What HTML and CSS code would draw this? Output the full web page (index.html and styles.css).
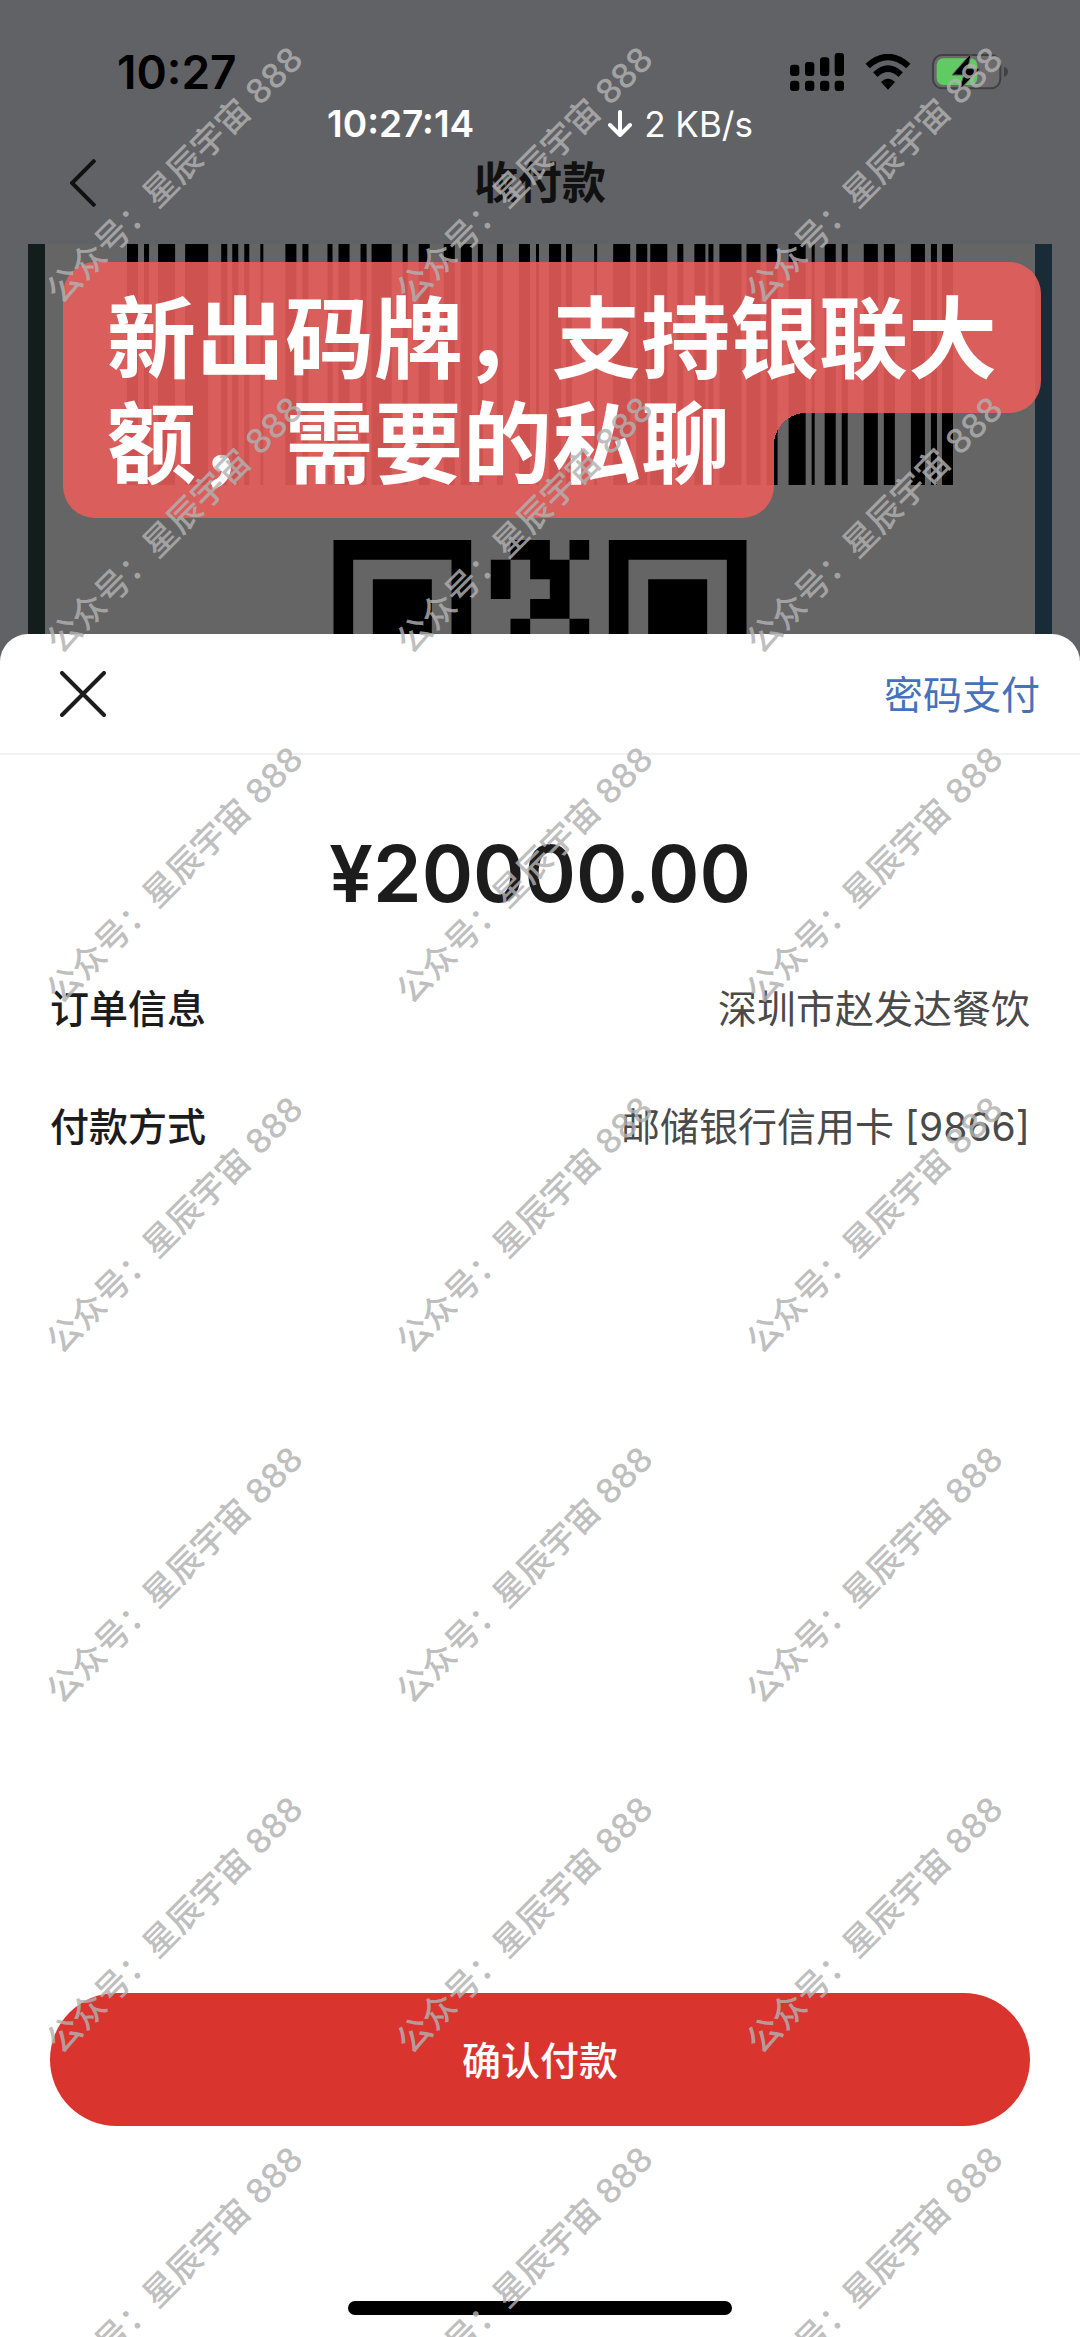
FILE: index.html
```html
<!DOCTYPE html>
<html lang="zh-CN">
<head>
<meta charset="utf-8">
<meta name="viewport" content="width=device-width, initial-scale=1">
<title>收付款</title>
<link rel="stylesheet" href="styles.css">
</head>
<body>
<div class="screen">
  <div class="backdrop">
    <div class="status">
      <span class="status-time">10:27</span>
      <span class="status-icons">
        <svg class="icon-signal" viewBox="0 0 162 114" aria-hidden="true">
          <rect x="0" y="35" width="28" height="34" rx="9"/><rect x="45" y="27" width="28" height="42" rx="9"/><rect x="90" y="13" width="28" height="56" rx="9"/><rect x="134" y="0" width="28" height="69" rx="9"/>
          <rect x="0" y="83" width="28" height="31" rx="9"/><rect x="45" y="83" width="28" height="31" rx="9"/><rect x="90" y="83" width="28" height="31" rx="9"/><rect x="134" y="83" width="28" height="31" rx="9"/>
        </svg>
        <svg class="icon-wifi" viewBox="0 0 138 108" aria-hidden="true">
          <path d="M8 36Q69-18 130 36" fill="none" stroke="#000" stroke-width="19"/>
          <path d="M31 62Q69 26 107 62" fill="none" stroke="#000" stroke-width="19"/>
          <path d="M48 84Q69 64 90 84L69 107Z"/>
        </svg>
        <svg class="icon-battery" viewBox="0 0 228 114" aria-hidden="true">
          <rect x="3" y="6" width="202" height="100" rx="28" fill="#6c6a6d" stroke="#404144" stroke-width="6"/>
          <rect x="14" y="16" width="122" height="80" rx="20" fill="#5fcb62"/>
          <path d="M216 41q12 4 12 15t-12 15z" fill="#404144"/>
          <path d="M118 0L60 66H96L80 114L144 47H107Z" fill="#000" stroke="#616266" stroke-width="3"/>
        </svg>
      </span>
    </div>
    <div class="net">
      <span class="net-clock">10:27:14</span>
      <span class="net-speed"><svg class="icon-down" viewBox="0 0 24 28" aria-hidden="true"><path d="M12 2V25M2 15L12 25L22 15"/></svg>2 KB/s</span>
    </div>
    <div class="nav">
      <button class="nav-back" type="button" aria-label="返回"><svg viewBox="0 0 26 48" aria-hidden="true"><path d="M25 1L2 24L25 47"/></svg></button>
      <h1 class="nav-title">收付款</h1>
    </div>
    <div class="code-card">
      <svg class="barcode" viewBox="0 0 824 241" preserveAspectRatio="none" role="img" aria-label="条形码">
        <path d="M0 0h11v241H0zM17 0h5v241h-5zM31 0h17v241H31zM58 0h23v241H58zM94 0h6v241h-6zM105 0h6v241h-6zM117 0h5v241h-5zM133 0h3v241h-3zM158 0h11v241h-11zM175 0h6v241h-6zM200 0h5v241h-5zM211 0h11v241h-11zM233 0h6v241h-6zM244 0h20v241h-20zM275 0h5v241h-5zM291 0h11v241h-11zM316 0h11v241h-11zM333 0h11v241h-11zM350 0h5v241h-5zM369 0h6v241h-6zM391 0h11v241h-11zM408 0h3v241h-3zM421 0h12v241h-12zM438 0h6v241h-6zM466 0h3v241h-3zM485 0h17v241h-17zM508 0h11v241h-11zM522 0h17v241h-17zM549 0h6v241h-6zM566 0h11v241h-11zM580 0h5v241h-5zM591 0h22v241h-22zM618 0h14v241h-14zM638 0h11v241h-11zM660 0h17v241h-17zM683 0h3v241h-3zM696 0h11v241h-11zM713 0h6v241h-6zM735 0h14v241h-14zM755 0h11v241h-11zM782 0h14v241h-14zM802 0h6v241h-6zM813 0h11v241h-11z"/>
      </svg>
      <svg class="qr" viewBox="0 0 21 6" role="img" aria-label="二维码">
        <path fill-rule="evenodd" d="M0 0H7V7H0zM1 1V7H6V1z"/><path d="M2 2H5V6H2z"/>
        <path fill-rule="evenodd" d="M14 0H21V7H14zM15 1V7H20V1z"/><path d="M16 2H19V6H16z"/>
        <path d="M9 0H11V1H12V4H10V3H11V2H10V1H9zM12 0H13V1H12zM8 1H9V3H8zM9 4H10V5H9zM12 4H13V5H12z"/>
      </svg>
      <p class="notice"><span class="notice-first">新出码牌，支持银联大</span><span class="notice-last">额，需要的私聊</span></p>
    </div>
  </div>

  <main class="sheet">
    <header class="sheet-head">
      <button class="close" type="button" aria-label="关闭"><svg viewBox="0 0 46 46" aria-hidden="true"><path d="M2 2L44 44M44 2L2 44"/></svg></button>
      <a class="switch" href="#">密码支付</a>
    </header>
    <p class="amount">¥20000.00</p>
    <dl class="details">
      <div class="row"><dt>订单信息</dt><dd>深圳市赵发达餐饮</dd></div>
      <div class="row"><dt>付款方式</dt><dd>邮储银行信用卡 [9866]</dd></div>
    </dl>
    <button class="confirm" type="button">确认付款</button>
    <div class="home"></div>
  </main>

  <div class="marks" aria-hidden="true">
    <span>公众号：星辰宇宙 888</span><span>公众号：星辰宇宙 888</span><span>公众号：星辰宇宙 888</span>
    <span>公众号：星辰宇宙 888</span><span>公众号：星辰宇宙 888</span><span>公众号：星辰宇宙 888</span>
    <span>公众号：星辰宇宙 888</span><span>公众号：星辰宇宙 888</span><span>公众号：星辰宇宙 888</span>
    <span>公众号：星辰宇宙 888</span><span>公众号：星辰宇宙 888</span><span>公众号：星辰宇宙 888</span>
    <span>公众号：星辰宇宙 888</span><span>公众号：星辰宇宙 888</span><span>公众号：星辰宇宙 888</span>
    <span>公众号：星辰宇宙 888</span><span>公众号：星辰宇宙 888</span><span>公众号：星辰宇宙 888</span>
    <span>公众号：星辰宇宙 888</span><span>公众号：星辰宇宙 888</span><span>公众号：星辰宇宙 888</span>
  </div>
</div>
</body>
</html>
```
FILE: styles.css
```css
* { box-sizing: border-box; }
body, h1, p, dl, dd { margin: 0; }
body {
  font-family: Inter, "Noto Sans CJK SC", sans-serif;
  color: #1c1c1c;
}
button {
  border: 0;
  padding: 0;
  background: none;
  font: inherit;
  color: inherit;
}
svg { display: block; }

.screen {
  position: relative;
  display: flex;
  flex-direction: column;
  min-height: 100vh;
  overflow: hidden;
}

/* dimmed page behind the sheet */
.backdrop { background: #616266; }

.status {
  display: flex;
  justify-content: space-between;
  align-items: center;
  height: 100px;
  padding: 44px 72px 0 117px;
}
.status-time {
  font-size: 46px;
  line-height: 56px;
  font-weight: 600;
  color: #000;
}
.status-icons {
  display: flex;
  align-items: center;
  gap: 21px;
}
.icon-signal { width: 54px; height: 38px; }
.icon-wifi { width: 46px; height: 36px; }
.icon-battery { width: 76px; height: 38px; }

.net {
  display: flex;
  justify-content: center;
  gap: 134px;
  font-size: 35px;
  line-height: 48px;
  color: #fff;
}
.net-clock {
  font-size: 37px;
  font-weight: 600;
}
.net-speed {
  display: flex;
  align-items: center;
  gap: 12px;
}
.icon-down {
  width: 24px;
  height: 28px;
  fill: none;
  stroke: #fff;
  stroke-width: 4;
  stroke-linecap: round;
  stroke-linejoin: round;
}

.nav {
  display: grid;
  grid-template-columns: 1fr auto 1fr;
  align-items: center;
  height: 96px;
  padding: 0 70px 26px;
}
.nav-back svg {
  width: 26px;
  height: 48px;
  fill: none;
  stroke: #111;
  stroke-width: 4;
}
.nav-title {
  font-size: 44px;
  line-height: 64px;
  font-weight: 600;
  color: #111;
}

.code-card {
  position: relative;
  height: 418px;
  margin: 0 28px;
  padding: 0 82px;
  background: #656565;
  border-left: 17px solid #121d1c;
  border-right: 17px solid #182b36;
}
.barcode {
  width: 100%;
  height: 241px;
}
.qr {
  width: 414px;
  height: 118px;
  margin: 55px auto 0;
}

.notice {
  position: absolute;
  top: 18px;
  left: 18px;
  display: flex;
  flex-direction: column;
  align-items: flex-start;
  font-size: 89px;
  font-weight: 700;
  color: #fff;
  white-space: nowrap;
}
.notice span {
  padding: 0 44px;
  background: rgba(234, 95, 91, 0.88);
}
.notice .notice-first {
  padding: 24px 44px 22px;
  line-height: 105px;
  border-radius: 32px 32px 32px 0;
}
.notice .notice-last {
  position: relative;
  padding-bottom: 43px;
  line-height: 62px;
  border-radius: 0 0 32px 32px;
}
/* inner rounded corner between the two lines */
.notice-last::after {
  content: "";
  position: absolute;
  top: 0;
  left: 100%;
  width: 32px;
  height: 32px;
  background: radial-gradient(circle at 100% 100%, transparent 32px, rgba(234, 95, 91, 0.88) 32px);
}

/* payment sheet */
.sheet {
  position: relative;
  flex: 1;
  display: flex;
  flex-direction: column;
  margin-top: -28px;
  padding-bottom: 22px;
  background: #fff;
  border-radius: 28px 28px 0 0;
}
.sheet-head {
  display: flex;
  justify-content: space-between;
  align-items: center;
  height: 121px;
  padding: 0 40px 0 60px;
  border-bottom: 2px solid #f1f1f1;
}
.close svg {
  width: 46px;
  height: 46px;
  fill: none;
  stroke: #1c1c1c;
  stroke-width: 4;
  stroke-linecap: round;
}
.switch {
  padding-bottom: 4px;
  font-size: 39px;
  color: #4672bd;
  text-decoration: none;
}
.amount {
  padding-top: 69px;
  text-align: center;
  font-size: 78px;
  line-height: 100px;
  font-weight: 600;
}
.details {
  display: flex;
  flex-direction: column;
  gap: 60px;
  padding: 56px 50px;
  font-size: 39px;
  line-height: 58px;
}
.row {
  display: flex;
  justify-content: space-between;
}
.row dt { font-weight: 500; }
.row dd { color: #4a4a4a; }
.confirm {
  height: 133px;
  margin: auto 50px 175px;
  padding-bottom: 4px;
  border-radius: 67px;
  background: #da342f;
  color: #fff;
  font-size: 39px;
  font-weight: 500;
}
.home {
  align-self: center;
  width: 384px;
  height: 14px;
  border-radius: 7px;
  background: #000;
}

/* tiled watermark laid over the whole screen */
.marks {
  position: absolute;
  inset: 0;
  display: grid;
  grid-template-columns: repeat(3, 350px);
  grid-auto-rows: 350px;
  place-items: center;
  overflow: hidden;
  pointer-events: none;
  font-size: 34px;
  line-height: 40px;
  font-weight: 500;
  color: rgba(177, 177, 177, 0.84);
  white-space: nowrap;
}
.marks span { transform: rotate(-45deg); }
```
